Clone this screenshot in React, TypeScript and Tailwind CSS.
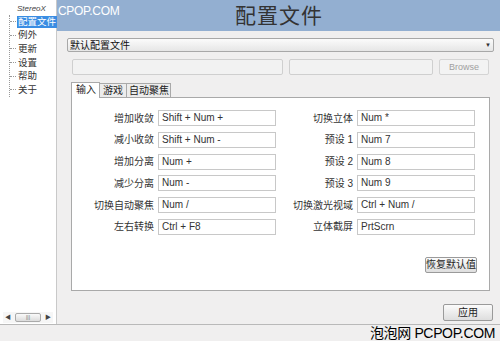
import React from "react";

const font = { fontFamily: '"Liberation Sans", "Noto Sans CJK SC", sans-serif' };

const left = [
  ["增加收敛", "Shift + Num +"],
  ["减小收敛", "Shift + Num -"],
  ["增加分离", "Num +"],
  ["减少分离", "Num -"],
  ["切换自动聚焦", "Num /"],
  ["左右转换", "Ctrl + F8"],
];

const right = [
  ["切换立体", "Num *"],
  ["预设 1", "Num 7"],
  ["预设 2", "Num 8"],
  ["预设 3", "Num 9"],
  ["切换激光视域", "Ctrl + Num /"],
  ["立体截屏", "PrtScrn"],
];

const tree = ["配置文件", "例外", "更新", "设置", "帮助", "关于"];

function KeyRow({ label, value }: { label: string; value: string }) {
  return (
    <div className="flex items-center h-[16px]">
      <div className="w-[86px] text-right pr-[4px] text-[10px] text-[#333] whitespace-nowrap">{label}</div>
      <div className="w-[118px] h-[16px] border border-[#c8c8c8] bg-white px-[3px] text-[10px] leading-[14px] text-[#333]">
        {value}
      </div>
    </div>
  );
}

export default function App() {
  return (
    <div className="w-[500px] h-[341px] flex flex-col bg-[#f0efef] overflow-hidden" style={font}>
      <div className="flex h-[325px] border-b border-[#b9b9b9]">
        {/* sidebar */}
        <div className="w-[57px] shrink-0 bg-white border-r border-[#c9c9c9] flex flex-col">
          <div className="flex-1 pt-[3px]">
            <div className="pl-[17px] text-[8px] italic leading-[11px] text-[#444] whitespace-nowrap">StereoX</div>
            <div className="ml-[9px] mt-[1px] border-l border-dotted border-[#999]">
              {tree.map((t, i) => (
                <div key={t} className="flex items-center h-[13.6px] whitespace-nowrap">
                  <span className="w-[6px] shrink-0 border-t border-dotted border-[#999]" />
                  <span
                    className={
                      i === 0
                        ? "ml-px px-[1px] bg-[#3a8de3] text-white text-[9.5px] leading-[12px]"
                        : "ml-px px-[1px] text-[#333] text-[9.5px] leading-[12px]"
                    }
                  >
                    {t}
                  </span>
                </div>
              ))}
            </div>
          </div>
          {/* scrollbar */}
          <div className="h-[11px] mb-[1px] mx-[3px] flex items-center justify-between bg-[#f6f6f6]">
            <span className="text-[6px] text-[#444] pl-[2px]">◀</span>
            <div className="w-[26px] h-[9px] border border-[#aaa] rounded-[2px] bg-gradient-to-b from-[#fafafa] to-[#dcdcdc] flex items-center justify-center text-[5px] text-[#666] leading-none">
              |||
            </div>
            <span className="text-[6px] text-[#444] pr-[2px]">▶</span>
          </div>
        </div>

        {/* main */}
        <div className="flex-1 flex flex-col">
          <div className="h-[31px] bg-[#93afd1] flex items-start relative">
            <span className="absolute left-[1px] top-[2px] text-[12px] text-white tracking-tight">CPOP.COM</span>
            <div className="flex-1 text-center text-[21px] leading-[31px] text-[#333] tracking-[1px]">配置文件</div>
          </div>
          <div className="pl-[10px] pr-[7px] pt-[7px]">
            <div className="h-[14px] border border-[#a8a8a8] rounded-[2px] bg-gradient-to-b from-[#fbfbfb] to-[#e6e6e6] flex items-center justify-between px-[2px] text-[10px] text-[#111]">
              <span>默认配置文件</span>
              <span className="text-[6px] text-[#333]">▼</span>
            </div>
            <div className="flex items-center mt-[7px] pl-[5px] pr-[5px] gap-[6px]">
              <div className="w-[211px] h-[16px] border border-[#cfcfcf] rounded-[2px] bg-[#f2f2f2]" />
              <div className="w-[144px] h-[16px] border border-[#cfcfcf] rounded-[2px] bg-[#f2f2f2]" />
              <div className="w-[50px] h-[16px] border border-[#d4d4d4] rounded-[2px] bg-[#f3f3f3] text-[9px] text-[#a0a0a0] text-center leading-[14px]">
                Browse
              </div>
            </div>
            <div className="flex items-end mt-[7px] ml-[4px] h-[15px] text-[10px] text-[#222] whitespace-nowrap">
              <div className="h-[16px] w-[29px] bg-white border border-b-0 border-[#a9a9a9] pl-[4px] leading-[14px] relative top-px z-10">输入</div>
              <div className="h-[14px] w-[27px] bg-[#ececec] border border-l-0 border-b-0 border-[#a9a9a9] pl-[3px] leading-[13px]">游戏</div>
              <div className="h-[14px] w-[44px] bg-[#ececec] border border-l-0 border-b-0 border-[#a9a9a9] pl-[2px] leading-[13px]">自动聚焦</div>
            </div>
            <div className="ml-[4px] mr-[4px] h-[194px] bg-white border border-[#a9a9a9] flex flex-col">
              <div className="flex pt-[12px]">
                <div className="flex flex-col gap-[5.8px]">
                  {left.map(([l, v]) => (
                    <KeyRow key={l} label={l} value={v} />
                  ))}
                </div>
                <div className="flex flex-col gap-[5.8px] ml-[-5px]">
                  {right.map(([l, v]) => (
                    <KeyRow key={l} label={l} value={v} />
                  ))}
                </div>
              </div>
              <div className="flex justify-end mt-[22px] pr-[12px]">
                <div className="w-[52px] h-[16px] border border-[#9a9a9a] rounded-[2px] bg-gradient-to-b from-[#fbfbfb] to-[#dedede] text-[10px] text-[#222] text-center leading-[14px] whitespace-nowrap">
                  恢复默认值
                </div>
              </div>
            </div>
            <div className="flex justify-end mt-[13px] pr-[1px]">
              <div className="w-[50px] h-[17px] border border-[#9a9a9a] rounded-[2px] bg-gradient-to-b from-[#fbfbfb] to-[#dedede] text-[10px] text-[#222] text-center leading-[15px]">
                应用
              </div>
            </div>
          </div>
        </div>
      </div>
      <div className="h-[16px] flex justify-end items-center pr-[5px]">
        <span className="text-[14px] text-black leading-none tracking-tight">泡泡网 PCPOP.COM</span>
      </div>
    </div>
  );
}
